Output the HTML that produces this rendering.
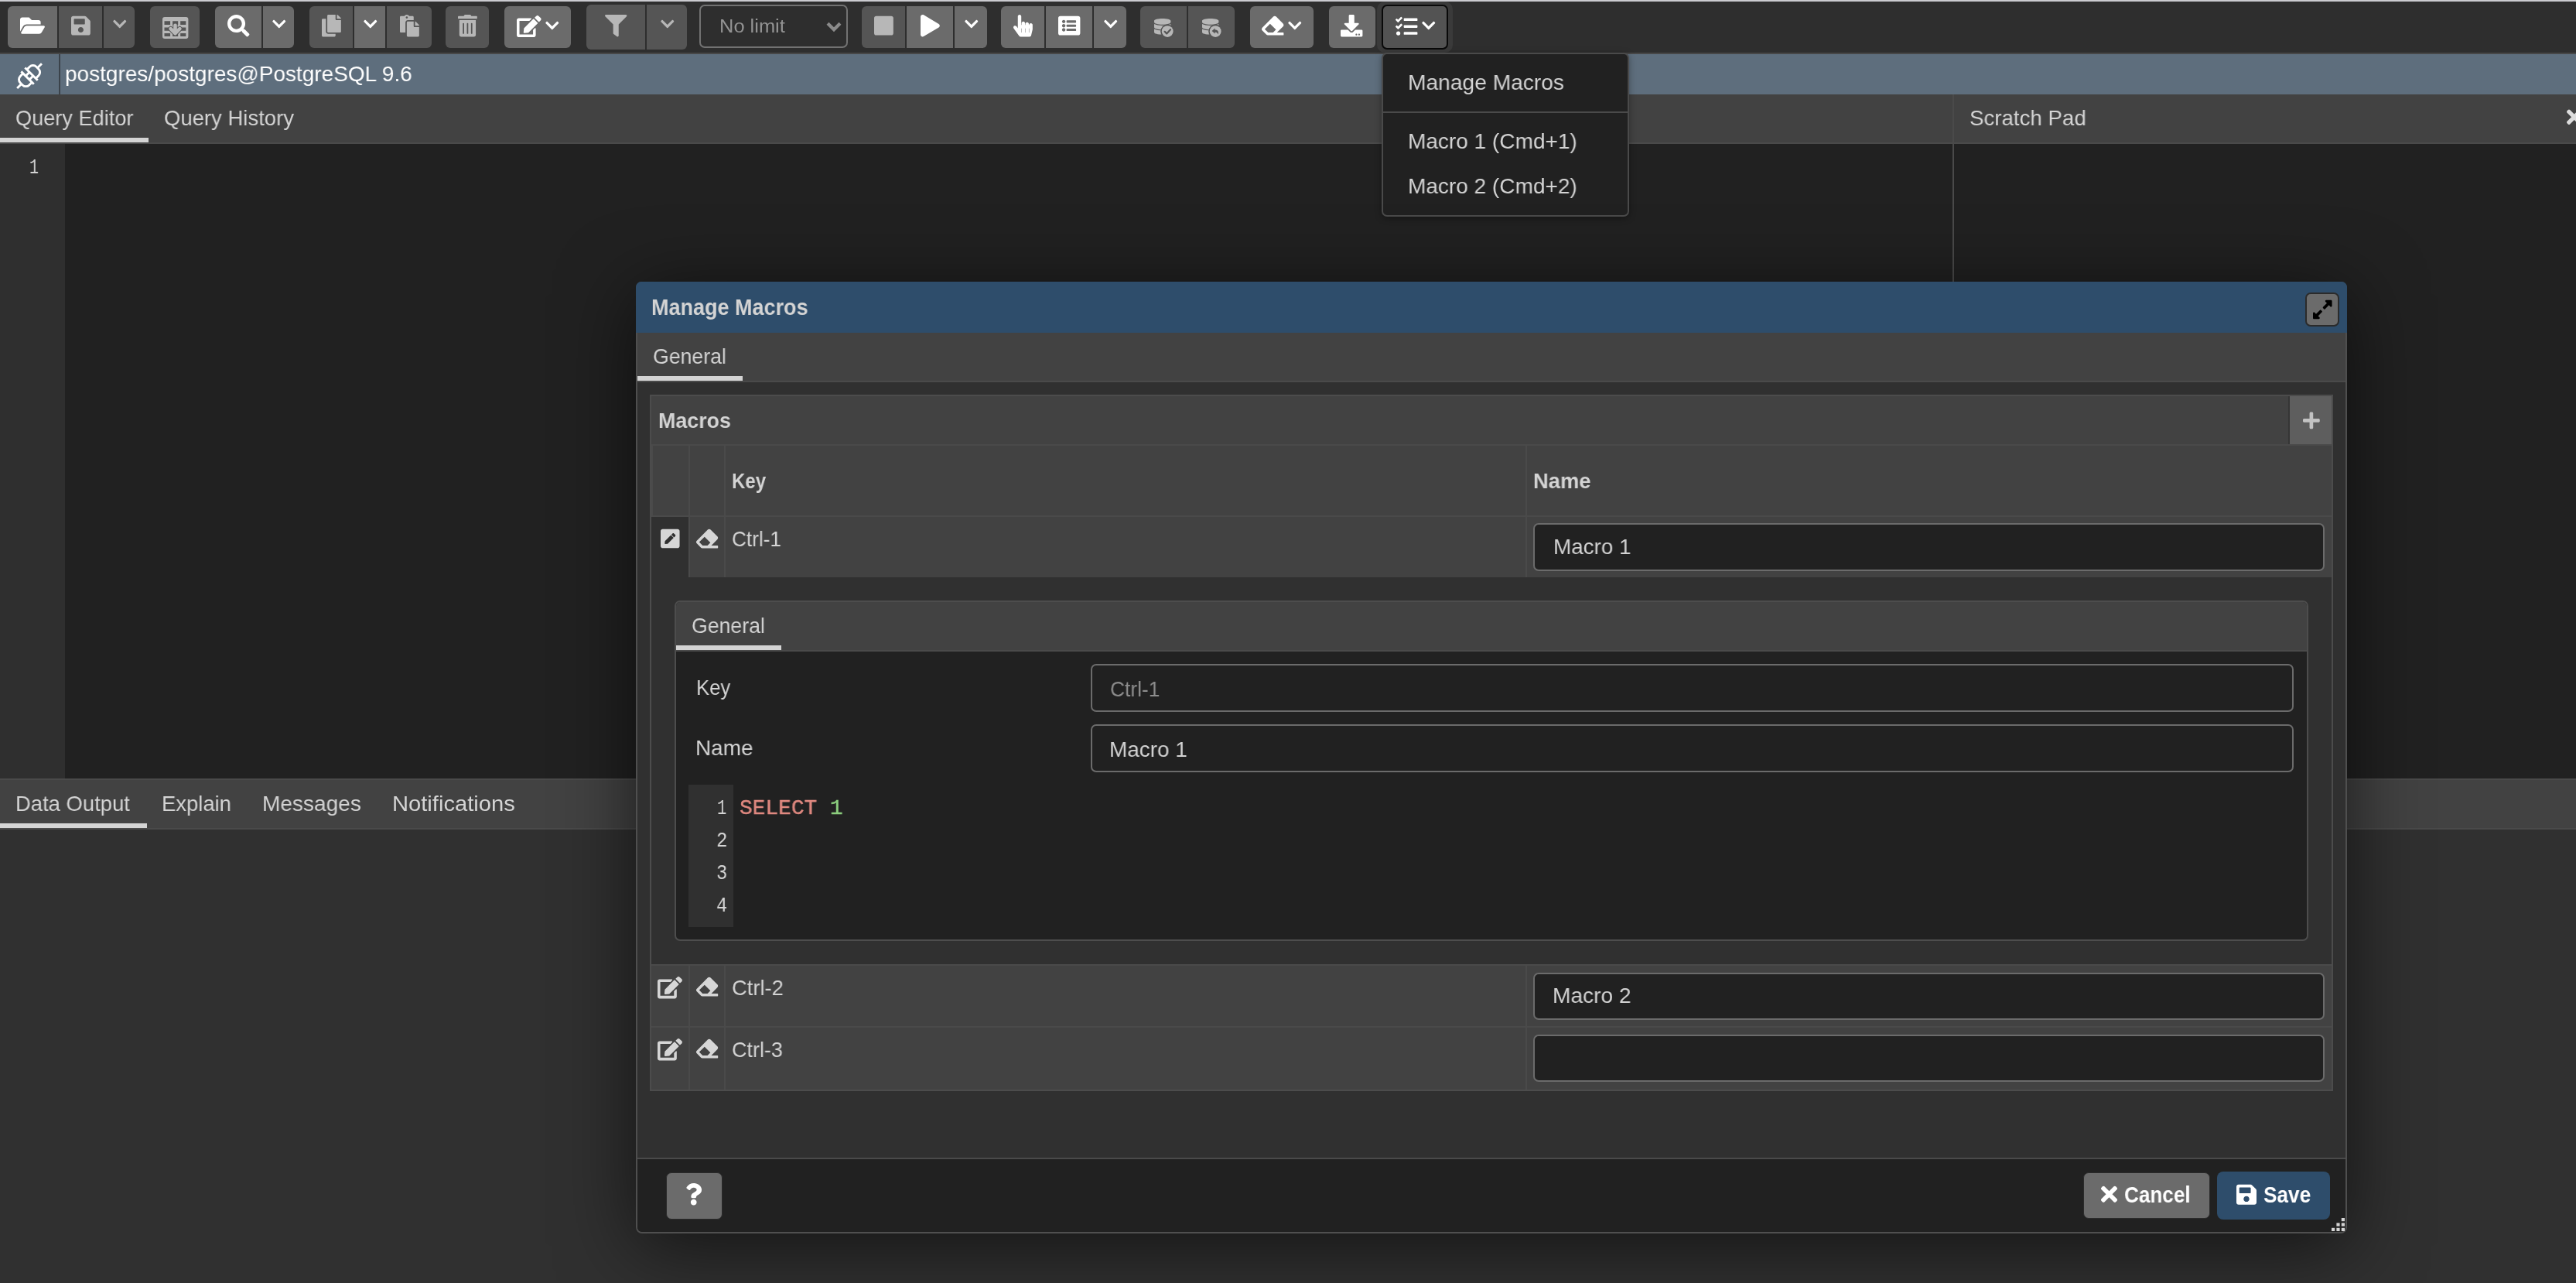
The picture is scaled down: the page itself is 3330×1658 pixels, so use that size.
<!DOCTYPE html>
<html lang="en">
<head>
<meta charset="utf-8">
<title>Query Tool - Manage Macros</title>
<style>
html,body{margin:0;padding:0;}
body{width:3330px;height:1658px;overflow:hidden;background:#212121;position:relative;
 font-family:"Liberation Sans",sans-serif;font-size:28.5px;color:#d4d4d4;}
*{box-sizing:border-box;}
.abs{position:absolute;}
.t{position:absolute;white-space:pre;line-height:1;transform-origin:0 0;will-change:transform;}
.b{font-weight:700;}
svg{position:absolute;display:block;overflow:visible;}
/* top strip */
#strip{left:0;top:0;width:3330px;height:2px;background:#cbcbd0;}
#toolbar{left:0;top:2px;width:3330px;height:66px;background:#2e2e2e;}
#tbline{left:0;top:68px;width:3330px;height:2px;background:#474747;}
.btn{position:absolute;top:8px;height:54px;background:#6b6b6b;}
.btn.d{background:#555555;}
.btn svg{fill:#fff;}
.btn.d svg{fill:#b7b7b7;}
.rl{border-top-left-radius:6px;border-bottom-left-radius:6px;}
.rr{border-top-right-radius:6px;border-bottom-right-radius:6px;}
#connbar{left:0;top:70px;width:3330px;height:52px;background:#5e6e7d;}
#connsep{left:76px;top:70px;width:2px;height:52px;background:#3b434b;}
.tabbar{position:absolute;background:#424242;}
.mono{font-family:"Liberation Mono",monospace;}
.kw{-webkit-text-stroke:0.45px currentColor;}
#conn{left:84.47px;top:80.80px;transform:scaleX(0.9816);color:#fff;}
#tqe{left:19.56px;top:137.80px;transform:scaleX(0.9525);}
#tqh{left:211.67px;top:137.80px;transform:scaleX(0.9643);}
#tsp{left:2546.08px;top:137.80px;transform:scaleX(0.9708);}
#nolimit{left:930.49px;top:22.35px;transform:scaleX(1.0434);font-size:24.4px;color:#939393;}
#ed1{left:37.99px;top:203.30px;transform:scaleX(0.7044);}
#tdo{left:19.87px;top:1023.80px;transform:scaleX(0.9621);}
#tex{left:208.63px;top:1023.80px;transform:scaleX(0.9628);}
#tme{left:338.90px;top:1023.80px;transform:scaleX(0.984);}
#tno{left:507.20px;top:1023.80px;transform:scaleX(1.0223);}
#mm{left:1820.02px;top:91.80px;transform:scaleX(0.9883);}
#m1{left:1820.03px;top:167.80px;transform:scaleX(0.9831);}
#m2{left:1820.03px;top:225.80px;transform:scaleX(0.9831);}
#dlgtitle{left:841.83px;top:381.55px;transform:scaleX(0.8997);font-size:30.0px;}
#tabgen{left:844.22px;top:445.80px;transform:scaleX(0.9355);}
#macros{left:851.44px;top:528.80px;transform:scaleX(0.9408);}
#hkey{left:946.12px;top:606.80px;transform:scaleX(0.8427);}
#hname{left:1981.90px;top:606.80px;transform:scaleX(0.9593);}
#ctrl1{left:945.92px;top:681.80px;transform:scaleX(0.9187);}
#in1{left:2007.77px;top:691.80px;transform:scaleX(0.9771);}
#tabgen2{left:894.22px;top:793.80px;transform:scaleX(0.9355);}
#lkey{left:899.81px;top:873.80px;transform:scaleX(0.9024);}
#inkey{left:1434.98px;top:875.80px;transform:scaleX(0.9243);color:#8d8d8d;}
#lname{left:899.42px;top:951.80px;transform:scaleX(0.9796);}
#inname{left:1434.47px;top:953.80px;transform:scaleX(0.98);}
#ln1{left:927.41px;top:1031.30px;transform:scaleX(0.7174);}
#ln2{left:925.96px;top:1073.30px;transform:scaleX(0.8409);}
#ln3{left:926.49px;top:1115.30px;transform:scaleX(0.8323);}
#ln4{left:926.12px;top:1157.30px;transform:scaleX(0.8266);}
#code{left:956.43px;top:1031.07px;transform:scaleX(0.9765);}
#ctrl2{left:946.19px;top:1261.80px;transform:scaleX(0.96);}
#in2{left:2007.43px;top:1271.80px;transform:scaleX(0.9872);}
#ctrl3{left:946.26px;top:1341.80px;transform:scaleX(0.9462);}
#cancel{left:2746.14px;top:1528.90px;transform:scaleX(0.8906);font-size:29.3px;color:#fff;}
#save{left:2925.67px;top:1528.90px;transform:scaleX(0.8935);font-size:29.3px;color:#fff;}
.uline{position:absolute;background:#d4d4d4;height:6px;}
</style>
</head>
<body>
<div id="strip" class="abs"></div>
<div id="toolbar" class="abs"></div>
<div id="tbline" class="abs"></div>
<div class="btn rl" style="left:10px;width:64.4px"><svg style="left:16.23px;top:11.40px;width:31.95px;height:28.40px" viewBox="0 0 576 512"><path d="M572.694 292.093L500.270 416.248A63.997 63.997 0 0 1 444.989 448H45.025c-18.523 0-30.064-20.093-20.731-36.093l72.424-124.155A64 64 0 0 1 152 256h399.964c18.523 0 30.064 20.093 20.730 36.093zM152 224h328v-48c0-26.510-21.490-48-48-48H272l-64-64H48C21.490 64 0 85.490 0 112v278.046l69.077-118.418C86.214 242.250 117.989 224 152 224z"/></svg></div>
<div class="btn d" style="left:76px;width:56.4px"><svg style="left:15.78px;top:11.40px;width:24.85px;height:28.40px" viewBox="0 0 448 512"><path d="M433.941 129.941l-83.882-83.882A48 48 0 0 0 316.118 32H48C21.490 32 0 53.490 0 80v352c0 26.510 21.490 48 48 48h352c26.510 0 48-21.490 48-48V163.882a48 48 0 0 0-14.059-33.941zM224 416c-35.346 0-64-28.654-64-64 0-35.346 28.654-64 64-64s64 28.654 64 64c0 35.346-28.654 64-64 64zm96-304.520V212c0 6.627-5.373 12-12 12H76c-6.627 0-12-5.373-12-12V108c0-6.627 5.373-12 12-12h228.520c3.183 0 6.235 1.264 8.485 3.515l3.480 3.480A11.996 11.996 0 0 1 320 111.480z"/></svg></div>
<div class="btn d rr" style="left:134px;width:40.0px"><svg style="left:11.55px;top:12.80px;width:17.50px;height:20.00px" viewBox="0 0 448 512"><path d="M207.029 381.476L12.686 187.132c-9.373-9.373-9.373-24.569 0-33.941l22.667-22.667c9.357-9.357 24.522-9.375 33.901-.04L224 284.505l154.745-154.021c9.379-9.335 24.544-9.317 33.901.04l22.667 22.667c9.373 9.373 9.373 24.569 0 33.941L240.971 381.476c-9.373 9.372-24.569 9.372-33.942 0z"/></svg></div>
<div class="btn d rl rr" style="left:194px;width:64.0px"><svg style="left:15.7px;top:13.9px;width:33.4px;height:28.1px" viewBox="0 0 334 281"><path fill-rule="evenodd" d="M30 0H304Q334 0 334 30V251Q334 281 304 281H30Q0 281 0 251V30Q0 0 30 0ZM25 52V101H101V52ZM131 52V101H202V52ZM232 52V101H303V52ZM25 134V177H101V134ZM131 134V177H202V134ZM232 134V177H303V134ZM25 210V251H101V210ZM131 210V251H202V210ZM232 210V251H303V210Z"/><path d="M165 107V205M106 152L165 212L224 152" fill="none" stroke="#555" stroke-width="64" stroke-linejoin="round" stroke-linecap="round"/><path d="M165 107V205M106 152L165 212L224 152" fill="none" stroke="#b7b7b7" stroke-width="46" stroke-linejoin="round" stroke-linecap="round"/></svg></div>
<div class="btn rl" style="left:278px;width:60.0px"><svg style="left:15.80px;top:11.40px;width:28.40px;height:28.40px" viewBox="0 0 512 512"><path d="M505 442.700L405.300 343c-4.500-4.500-10.600-7-17-7H372c27.600-35.300 44-79.700 44-128C416 93.100 322.900 0 208 0S0 93.100 0 208s93.100 208 208 208c48.300 0 92.700-16.400 128-44v16.300c0 6.400 2.500 12.500 7 17l99.700 99.700c9.400 9.400 24.600 9.400 33.900 0l28.300-28.300c9.400-9.400 9.400-24.600.1-34zM208 336c-70.700 0-128-57.200-128-128 0-70.700 57.200-128 128-128 70.700 0 128 57.200 128 128 0 70.700-57.200 128-128 128z"/></svg></div>
<div class="btn rr" style="left:340px;width:40.0px"><svg style="left:11.55px;top:12.80px;width:17.50px;height:20.00px" viewBox="0 0 448 512"><path d="M207.029 381.476L12.686 187.132c-9.373-9.373-9.373-24.569 0-33.941l22.667-22.667c9.357-9.357 24.522-9.375 33.901-.04L224 284.505l154.745-154.021c9.379-9.335 24.544-9.317 33.901.04l22.667 22.667c9.373 9.373 9.373 24.569 0 33.941L240.971 381.476c-9.373 9.372-24.569 9.372-33.942 0z"/></svg></div>
<div class="btn d rl" style="left:400px;width:56.0px"><svg style="left:15.58px;top:11.40px;width:24.85px;height:28.40px" viewBox="0 0 448 512"><path d="M320 448v40c0 13.255-10.745 24-24 24H24c-13.255 0-24-10.745-24-24V120c0-13.255 10.745-24 24-24h72v296c0 30.879 25.121 56 56 56h168zm0-344V0H152c-13.255 0-24 10.745-24 24v368c0 13.255 10.745 24 24 24h272c13.255 0 24-10.745 24-24V128H344c-13.200 0-24-10.800-24-24zm120.971-31.029L375.029 7.029A24 24 0 0 0 358.059 0H352v96h96v-6.059a24 24 0 0 0-7.029-16.970z"/></svg></div>
<div class="btn" style="left:458px;width:40.0px"><svg style="left:11.55px;top:12.80px;width:17.50px;height:20.00px" viewBox="0 0 448 512"><path d="M207.029 381.476L12.686 187.132c-9.373-9.373-9.373-24.569 0-33.941l22.667-22.667c9.357-9.357 24.522-9.375 33.901-.04L224 284.505l154.745-154.021c9.379-9.335 24.544-9.317 33.901.04l22.667 22.667c9.373 9.373 9.373 24.569 0 33.941L240.971 381.476c-9.373 9.372-24.569 9.372-33.942 0z"/></svg></div>
<div class="btn d rr" style="left:500px;width:58.0px"><svg style="left:16.58px;top:11.40px;width:24.85px;height:28.40px" viewBox="0 0 448 512"><path d="M128 184c0-30.879 25.122-56 56-56h136V56c0-13.255-10.745-24-24-24h-80.610C204.306 12.890 183.637 0 160 0s-44.306 12.890-55.390 32H24C10.745 32 0 42.745 0 56v336c0 13.255 10.745 24 24 24h104V184zm32-144c13.255 0 24 10.745 24 24s-10.745 24-24 24-24-10.745-24-24 10.745-24 24-24zm184 248h104v200c0 13.255-10.745 24-24 24H184c-13.255 0-24-10.745-24-24V184c0-13.255 10.745-24 24-24h136v104c0 13.200 10.800 24 24 24zm104-38.059V256h-96v-96h6.059a24 24 0 0 1 16.970 7.029l65.941 65.941a24.002 24.002 0 0 1 7.030 16.971z"/></svg></div>
<div class="btn d rl rr" style="left:576px;width:56.0px"><svg style="left:15.58px;top:11.40px;width:24.85px;height:28.40px" viewBox="0 0 448 512"><path d="M32 464a48 48 0 0 0 48 48h288a48 48 0 0 0 48-48V128H32zm272-256a16 16 0 0 1 32 0v224a16 16 0 0 1-32 0zm-96 0a16 16 0 0 1 32 0v224a16 16 0 0 1-32 0zm-96 0a16 16 0 0 1 32 0v224a16 16 0 0 1-32 0zM432 32H312l-9.400-18.700A24 24 0 0 0 281.100 0H166.800a23.720 23.720 0 0 0-21.400 13.300L136 32H16A16 16 0 0 0 0 48v32a16 16 0 0 0 16 16h416a16 16 0 0 0 16-16V48a16 16 0 0 0-16-16z"/></svg></div>
<div class="btn rl rr" style="left:652px;width:86.0px"><svg style="left:15.75px;top:11.70px;width:31.61px;height:28.10px" viewBox="0 0 576 512"><path d="M402.600 83.200l90.200 90.200c3.800 3.800 3.800 10 0 13.800L274.400 405.600l-92.800 10.300c-12.400 1.400-22.900-9.100-21.500-21.500l10.300-92.800L388.800 83.200c3.800-3.800 10-3.800 13.800 0zm162-22.900l-48.800-48.800c-15.200-15.200-39.900-15.200-55.200 0l-35.400 35.400c-3.800 3.800-3.800 10 0 13.800l90.200 90.200c3.800 3.800 10 3.800 13.800 0l35.400-35.400c15.200-15.300 15.200-40 0-55.200zM384 346.200V448H64V128h229.800c3.200 0 6.200-1.300 8.500-3.500l40-40c7.600-7.600 2.200-20.500-8.500-20.500H48C21.500 64 0 85.500 0 112v352c0 26.500 21.500 48 48 48h352c26.500 0 48-21.500 48-48V306.200c0-10.700-12.900-16-20.500-8.500l-40 40c-2.200 2.300-3.500 5.300-3.500 8.500z"/></svg><svg style="left:52.65px;top:14.80px;width:17.50px;height:20.00px" viewBox="0 0 448 512"><path d="M207.029 381.476L12.686 187.132c-9.373-9.373-9.373-24.569 0-33.941l22.667-22.667c9.357-9.357 24.522-9.375 33.901-.04L224 284.505l154.745-154.021c9.379-9.335 24.544-9.317 33.901.04l22.667 22.667c9.373 9.373 9.373 24.569 0 33.941L240.971 381.476c-9.373 9.372-24.569 9.372-33.942 0z"/></svg></div>
<div class="btn d rl" style="left:758px;width:76.0px;top:6px;height:58px"><svg style="left:23.80px;top:13.40px;width:28.40px;height:28.40px" viewBox="0 0 512 512"><path d="M487.976 0H24.028C2.710 0-8.047 25.866 7.058 40.971L192 225.941V432c0 7.831 3.821 15.170 10.237 19.662l80 55.980C298.020 518.690 320 507.493 320 487.980V225.941l184.947-184.970C520.021 25.896 509.338 0 487.976 0z"/></svg></div>
<div class="btn d rr" style="left:836px;width:52.0px;top:6px;height:58px"><svg style="left:17.55px;top:14.80px;width:17.50px;height:20.00px" viewBox="0 0 448 512"><path d="M207.029 381.476L12.686 187.132c-9.373-9.373-9.373-24.569 0-33.941l22.667-22.667c9.357-9.357 24.522-9.375 33.901-.04L224 284.505l154.745-154.021c9.379-9.335 24.544-9.317 33.901.04l22.667 22.667c9.373 9.373 9.373 24.569 0 33.941L240.971 381.476c-9.373 9.372-24.569 9.372-33.942 0z"/></svg></div>
<div class="btn d rl" style="left:1114px;width:56.0px"><svg style="left:15.58px;top:11.40px;width:24.85px;height:28.40px" viewBox="0 0 448 512"><path d="M400 32H48C21.5 32 0 53.5 0 80v352c0 26.5 21.5 48 48 48h352c26.5 0 48-21.500 48-48V80c0-26.500-21.500-48-48-48z"/></svg></div>
<div class="btn" style="left:1172px;width:60.0px"><svg style="left:17.58px;top:11.40px;width:24.85px;height:28.40px" viewBox="0 0 448 512"><path d="M424.4 214.7L72.4 6.6C43.8-10.3 0 6.1 0 47.9V464c0 37.5 40.7 60.1 72.4 41.3l352-208c31.4-18.5 31.5-64.1 0-82.6z"/></svg></div>
<div class="btn rr" style="left:1234px;width:42.0px"><svg style="left:12.55px;top:12.80px;width:17.50px;height:20.00px" viewBox="0 0 448 512"><path d="M207.029 381.476L12.686 187.132c-9.373-9.373-9.373-24.569 0-33.941l22.667-22.667c9.357-9.357 24.522-9.375 33.901-.04L224 284.505l154.745-154.021c9.379-9.335 24.544-9.317 33.901.04l22.667 22.667c9.373 9.373 9.373 24.569 0 33.941L240.971 381.476c-9.373 9.372-24.569 9.372-33.942 0z"/></svg></div>
<div class="btn rl" style="left:1294px;width:56.0px"><svg style="left:15.58px;top:11.40px;width:24.85px;height:28.40px" viewBox="0 0 448 512"><path d="M448 240v96c0 3.084-.356 6.159-1.063 9.162l-32 136C410.686 499.230 394.562 512 376 512H168a40.004 40.004 0 0 1-32.350-16.473l-127.997-176c-12.993-17.866-9.043-42.883 8.822-55.876 17.867-12.994 42.884-9.043 55.877 8.823L104 315.992V40c0-22.091 17.908-40 40-40s40 17.909 40 40v200h8v-40c0-22.091 17.908-40 40-40s40 17.909 40 40v40h8v-24c0-22.091 17.908-40 40-40s40 17.909 40 40v24h8c0-22.091 17.908-40 40-40s40 17.909 40 40zm-256 80h-8v96h8v-96zm88 0h-8v96h8v-96zm88 0h-8v96h8v-96z"/></svg></div>
<div class="btn" style="left:1352px;width:60.0px"><svg style="left:15.80px;top:11.40px;width:28.40px;height:28.40px" viewBox="0 0 512 512"><path d="M464 480H48c-26.510 0-48-21.490-48-48V80c0-26.510 21.490-48 48-48h416c26.510 0 48 21.490 48 48v352c0 26.510-21.490 48-48 48zM128 120c-22.091 0-40 17.909-40 40s17.909 40 40 40 40-17.909 40-40-17.909-40-40-40zm0 96c-22.091 0-40 17.909-40 40s17.909 40 40 40 40-17.909 40-40-17.909-40-40-40zm0 96c-22.091 0-40 17.909-40 40s17.909 40 40 40 40-17.909 40-40-17.909-40-40-40zm288-136v-32c0-6.627-5.373-12-12-12H204c-6.627 0-12 5.373-12 12v32c0 6.627 5.373 12 12 12h200c6.627 0 12-5.373 12-12zm0 96v-32c0-6.627-5.373-12-12-12H204c-6.627 0-12 5.373-12 12v32c0 6.627 5.373 12 12 12h200c6.627 0 12-5.373 12-12zm0 96v-32c0-6.627-5.373-12-12-12H204c-6.627 0-12 5.373-12 12v32c0 6.627 5.373 12 12 12h200c6.627 0 12-5.373 12-12z"/></svg></div>
<div class="btn rr" style="left:1414px;width:42.0px"><svg style="left:12.55px;top:12.80px;width:17.50px;height:20.00px" viewBox="0 0 448 512"><path d="M207.029 381.476L12.686 187.132c-9.373-9.373-9.373-24.569 0-33.941l22.667-22.667c9.357-9.357 24.522-9.375 33.901-.04L224 284.505l154.745-154.021c9.379-9.335 24.544-9.317 33.901.04l22.667 22.667c9.373 9.373 9.373 24.569 0 33.941L240.971 381.476c-9.373 9.372-24.569 9.372-33.942 0z"/></svg></div>
<div class="btn d rl" style="left:1474px;width:60.0px"><svg style="left:17.80px;top:15.90px;width:21.4px;height:20.6px" viewBox="0 0 448 512" preserveAspectRatio="none"><path d="M448 73.143v45.714C448 159.143 347.667 192 224 192S0 159.143 0 118.857V73.143C0 32.857 100.333 0 224 0s224 32.857 224 73.143zM448 176v102.857C448 319.143 347.667 352 224 352S0 319.143 0 278.857V176c48.125 33.143 136.208 48.572 224 48.572S399.874 209.143 448 176zm0 160v102.857C448 479.143 347.667 512 224 512S0 479.143 0 438.857V336c48.125 33.143 136.208 48.572 224 48.572S399.874 369.143 448 336z"/></svg><svg style="left:0;top:0;width:60px;height:54px" viewBox="0 0 60 54"><circle cx="35.2" cy="32.6" r="9.0" fill="#555"/><circle cx="35.2" cy="32.6" r="7.4"/><path d="M31.6 32.800000000000004L34.2 35.4L39.0 30.200000000000003" fill="none" stroke="#555" stroke-width="2.2" stroke-linecap="round" stroke-linejoin="round"/></svg></div>
<div class="btn d rr" style="left:1536px;width:60.0px"><svg style="left:17.80px;top:15.90px;width:21.4px;height:20.6px" viewBox="0 0 448 512" preserveAspectRatio="none"><path d="M448 73.143v45.714C448 159.143 347.667 192 224 192S0 159.143 0 118.857V73.143C0 32.857 100.333 0 224 0s224 32.857 224 73.143zM448 176v102.857C448 319.143 347.667 352 224 352S0 319.143 0 278.857V176c48.125 33.143 136.208 48.572 224 48.572S399.874 209.143 448 176zm0 160v102.857C448 479.143 347.667 512 224 512S0 479.143 0 438.857V336c48.125 33.143 136.208 48.572 224 48.572S399.874 369.143 448 336z"/></svg><svg style="left:0;top:0;width:60px;height:54px" viewBox="0 0 60 54"><circle cx="35.2" cy="32.6" r="9.0" fill="#555"/><circle cx="35.2" cy="32.6" r="7.4"/><path d="M30.6 32.0L34.6 28.400000000000002V30.6C38.6 30.6 39.800000000000004 33.2 38.6 36.6C38.0 34.4 36.6 33.4 34.6 33.4V35.6Z" fill="#555"/></svg></div>
<div class="btn rl rr" style="left:1616px;width:82.0px"><svg style="left:14.90px;top:10.80px;width:28.40px;height:28.40px" viewBox="0 0 512 512"><path d="M497.941 273.941c18.745-18.745 18.745-49.137 0-67.882l-160-160c-18.745-18.745-49.136-18.746-67.883 0l-256 256c-18.745 18.745-18.745 49.137 0 67.882l96 96A48.004 48.004 0 0 0 144 480h356c6.627 0 12-5.373 12-12v-40c0-6.627-5.373-12-12-12H355.883l142.058-142.059zm-302.627-62.627l137.373 137.373L265.373 416H150.628l-80-80 124.686-124.686z"/></svg><svg style="left:49.10px;top:14.80px;width:17.50px;height:20.00px" viewBox="0 0 448 512"><path d="M207.029 381.476L12.686 187.132c-9.373-9.373-9.373-24.569 0-33.941l22.667-22.667c9.357-9.357 24.522-9.375 33.901-.04L224 284.505l154.745-154.021c9.379-9.335 24.544-9.317 33.901.04l22.667 22.667c9.373 9.373 9.373 24.569 0 33.941L240.971 381.476c-9.373 9.372-24.569 9.372-33.942 0z"/></svg></div>
<div class="btn rl rr" style="left:1718px;width:60.0px"><svg style="left:14.80px;top:11.40px;width:28.40px;height:28.40px" viewBox="0 0 512 512"><path d="M216 0h80c13.300 0 24 10.700 24 24v168h87.700c17.800 0 26.700 21.500 14.100 34.100L269.700 378.300c-7.500 7.500-19.800 7.500-27.300 0L90.100 226.100c-12.600-12.600-3.700-34.100 14.100-34.100H192V24c0-13.300 10.700-24 24-24zm296 376v112c0 13.300-10.700 24-24 24H24c-13.300 0-24-10.700-24-24V376c0-13.300 10.700-24 24-24h146.700l49 49c20.100 20.100 52.500 20.100 72.600 0l49-49H488c13.300 0 24 10.700 24 24zm-124 88c0-11-9-20-20-20s-20 9-20 20 9 20 20 20 20-9 20-20zm64 0c0-11-9-20-20-20s-20 9-20 20 9 20 20 20 20-9 20-20z"/></svg></div>
<div class="abs" style="left:904px;top:6px;width:192px;height:56px;border:2px solid #727272;border-radius:7px;background:#2e2e2e"></div>
<div id="nolimit" class="t ">No limit</div>
<svg style="left:1068px;top:27px;width:20px;height:15px" viewBox="0 0 20 15"><path d="M2 3.2L10 11.2L18 3.2" fill="none" stroke="#8b8b8b" stroke-width="4.2"/></svg>
<div class="abs" style="left:1780px;top:2px;width:98px;height:66px;border-radius:10px;background:#3a3a3a"></div>
<div class="btn rl rr" style="left:1786px;top:6px;width:86px;height:58px;background:#535353;border:2.5px solid #090909;border-radius:7px"><svg style="left:15.60px;top:11.60px;width:28.40px;height:28.40px" viewBox="0 0 512 512"><path d="M139.610 35.500a12 12 0 0 0-17 0L58.930 98.810l-22.700-22.120a12 12 0 0 0-17 0L3.530 92.410a12 12 0 0 0 0 17l47.590 47.400a12.780 12.780 0 0 0 17.610 0l15.590-15.620L156.520 69a12.090 12.090 0 0 0 .09-17zm0 159.190a12 12 0 0 0-17 0l-63.680 63.720-22.700-22.100a12 12 0 0 0-17 0L3.530 252a12 12 0 0 0 0 17L51 316.500a12.770 12.770 0 0 0 17.600 0l15.700-15.690 72.200-72.220a12 12 0 0 0 .09-16.900zM64 368c-26.490 0-48.590 21.500-48.590 48S37.530 464 64 464a48 48 0 0 0 0-96zm432 16H208a16 16 0 0 0-16 16v32a16 16 0 0 0 16 16h288a16 16 0 0 0 16-16v-32a16 16 0 0 0-16-16zm0-320H208a16 16 0 0 0-16 16v32a16 16 0 0 0 16 16h288a16 16 0 0 0 16-16V80a16 16 0 0 0-16-16zm0 160H208a16 16 0 0 0-16 16v32a16 16 0 0 0 16 16h288a16 16 0 0 0 16-16v-32a16 16 0 0 0-16-16z"/></svg><svg style="left:49.85px;top:15.00px;width:17.50px;height:20.00px" viewBox="0 0 448 512"><path d="M207.029 381.476L12.686 187.132c-9.373-9.373-9.373-24.569 0-33.941l22.667-22.667c9.357-9.357 24.522-9.375 33.901-.04L224 284.505l154.745-154.021c9.379-9.335 24.544-9.317 33.901.04l22.667 22.667c9.373 9.373 9.373 24.569 0 33.941L240.971 381.476c-9.373 9.372-24.569 9.372-33.942 0z"/></svg></div>

<div id="connbar" class="abs"></div>
<div id="connsep" class="abs"></div>
<svg style="left:0;top:70px;width:76px;height:52px" viewBox="0 70 76 52" fill="none" stroke="#fff" stroke-width="2.9">
<g transform="translate(38.05 98.1) rotate(-45)">
<path d="M-22.5 0H-14.6M14.6 0H22.5"/>
<path d="M-3.5 -8.1H-8.6A6 6 0 0 0 -14.6 -2.1V2.1A6 6 0 0 0 -8.6 8.1H-3.5"/>
<path d="M3.5 -8.1H8.6A6 6 0 0 1 14.6 -2.1V2.1A6 6 0 0 1 8.6 8.1H3.5"/>
<path d="M-3.5 -11.6V11.6M3.5 -11.6V11.6"/>
<path d="M-3.5 -3.4H3.5M-3.5 3.4H3.5"/>
</g>
</svg>
<div id="conn" class="t ">postgres/postgres@PostgreSQL 9.6</div>
<!-- top tab bar -->
<div class="tabbar" style="left:0;top:122px;width:3330px;height:63px"></div>
<div class="abs" style="left:0;top:184px;width:3330px;height:2px;background:#4a4a4a"></div>
<div class="uline" style="left:0;top:178px;width:192px"></div>
<div id="tqe" class="t ">Query Editor</div>
<div id="tqh" class="t ">Query History</div>
<div class="abs" style="left:2524px;top:122px;width:2px;height:1000px;background:#4a4a4a"></div>
<div id="tsp" class="t ">Scratch Pad</div>
<svg style="left:3318.40px;top:137.40px;width:19.52px;height:28.40px" viewBox="0 0 352 512" fill="#dcdcdc"><path d="M242.720 256l100.070-100.070c12.280-12.280 12.280-32.190 0-44.480l-22.240-22.240c-12.280-12.280-32.190-12.280-44.480 0L176 189.280 75.930 89.210c-12.280-12.280-32.190-12.280-44.480 0L9.210 111.450c-12.280 12.280-12.280 32.190 0 44.480L109.280 256 9.210 356.070c-12.280 12.280-12.280 32.190 0 44.480l22.240 22.240c12.280 12.280 32.200 12.280 44.480 0L176 322.720l100.070 100.070c12.280 12.280 32.200 12.280 44.480 0l22.240-22.240c12.280-12.280 12.280-32.190 0-44.480L242.720 256z"/></svg>
<!-- editor -->
<div class="abs" style="left:0;top:186px;width:84px;height:820px;background:#2f2f2f"></div>
<div id="ed1" class="t mono">1</div>
<!-- bottom panel -->
<div class="abs" style="left:0;top:1006px;width:3330px;height:652px;background:#303030"></div>
<div class="tabbar" style="left:0;top:1006px;width:3330px;height:66px;border-top:2px solid #4a4a4a;border-bottom:2px solid #4a4a4a"></div>
<div class="uline" style="left:0;top:1064px;width:190px"></div>
<div id="tdo" class="t ">Data Output</div>
<div id="tex" class="t ">Explain</div>
<div id="tme" class="t ">Messages</div>
<div id="tno" class="t ">Notifications</div>

<div class="abs" style="left:1786px;top:68px;width:320px;height:212px;background:#212121;border:2px solid #4a4a4a;border-radius:7px;box-shadow:0 2px 8px rgba(0,0,0,.35)"></div>
<div class="abs" style="left:1788px;top:144px;width:316px;height:2px;background:#4a4a4a"></div>
<div id="mm" class="t ">Manage Macros</div>
<div id="m1" class="t ">Macro 1 (Cmd+1)</div>
<div id="m2" class="t ">Macro 2 (Cmd+2)</div>

<div class="abs" style="left:822px;top:364px;width:2212px;height:1230px;background:#303030;border:2px solid #4f4f4f;border-radius:8px;box-shadow:0 16px 98px rgba(0,0,0,.6)"></div>
<div class="abs" style="left:822px;top:364px;width:2212px;height:66px;background:#2e4d6b;border-radius:7px 7px 0 0"></div>
<div id="dlgtitle" class="t b">Manage Macros</div>
<div class="abs" style="left:2980px;top:378px;width:44px;height:44px;background:#6b6b6b;border:2px solid #2b2b2b;border-radius:7px"></div>
<svg style="left:2989.60px;top:385.90px;width:24.59px;height:28.10px" viewBox="0 0 448 512" fill="#000"><path d="M212.686 315.314L120 408l32.922 31.029c15.120 15.120 4.412 40.971-16.970 40.971h-112C10.697 480 0 469.255 0 456V344c0-21.382 25.803-32.090 40.922-16.971L72 360l92.686-92.686c6.248-6.248 16.379-6.248 22.627 0l25.373 25.373c6.249 6.248 6.249 16.378 0 22.627zm22.628-118.628L328 104l-32.922-31.029C279.958 57.851 290.666 32 312.048 32h112C437.303 32 448 42.745 448 56v112c0 21.382-25.803 32.090-40.922 16.971L376 152l-92.686 92.686c-6.248 6.248-16.379 6.248-22.627 0l-25.373-25.373c-6.249-6.248-6.249-16.378 0-22.627z"/></svg>
<div class="abs" style="left:824px;top:430px;width:2208px;height:62px;background:#424242"></div>
<div class="abs" style="left:824px;top:492px;width:2208px;height:2px;background:#4a4a4a"></div>
<div class="abs" style="left:824px;top:486px;width:136px;height:6px;background:#d4d4d4"></div>
<div id="tabgen" class="t ">General</div>
<div class="abs" style="left:840px;top:510px;width:2176px;height:900px;background:#424242;border:2px solid #4c4c4c"></div>
<div id="macros" class="t b">Macros</div>
<div class="abs" style="left:2958px;top:512px;width:56px;height:62px;background:#5e5e5e;border-left:2px solid #353535"></div>
<svg style="left:2976.61px;top:530.80px;width:21.79px;height:24.90px" viewBox="0 0 448 512" fill="#c3c3c3"><path d="M416 208H272V64c0-17.670-14.330-32-32-32h-32c-17.670 0-32 14.330-32 32v144H32c-17.670 0-32 14.330-32 32v32c0 17.670 14.330 32 32 32h144v144c0 17.670 14.330 32 32 32h32c17.670 0 32-14.330 32-32V304h144c17.670 0 32-14.330 32-32v-32c0-17.670-14.330-32-32-32z"/></svg>
<div class="abs" style="left:842px;top:574px;width:2172px;height:2px;background:#4a4a4a"></div>
<div class="abs" style="left:842px;top:576px;width:2px;height:90px;background:#4a4a4a"></div>
<div class="abs" style="left:890px;top:576px;width:2px;height:90px;background:#4a4a4a"></div>
<div class="abs" style="left:936px;top:576px;width:2px;height:90px;background:#4a4a4a"></div>
<div class="abs" style="left:1972px;top:576px;width:2px;height:90px;background:#4a4a4a"></div>
<div id="hkey" class="t b">Key</div>
<div id="hname" class="t b">Name</div>
<div class="abs" style="left:842px;top:666px;width:2172px;height:2px;background:#4a4a4a"></div>
<div class="abs" style="left:842px;top:668px;width:48px;height:78px;background:#303030"></div>
<div class="abs" style="left:890px;top:668px;width:2px;height:78px;background:#4a4a4a"></div>
<div class="abs" style="left:936px;top:668px;width:2px;height:78px;background:#4a4a4a"></div>
<div class="abs" style="left:1972px;top:668px;width:2px;height:78px;background:#4a4a4a"></div>
<svg style="left:853.75px;top:681.65px;width:24.54px;height:28.05px" viewBox="0 0 448 512" fill="#d6d6d6"><path d="M400 480H48c-26.500 0-48-21.500-48-48V80c0-26.500 21.500-48 48-48h352c26.500 0 48 21.500 48 48v352c0 26.500-21.500 48-48 48zM238.100 177.900L102.400 313.600l-6.300 57.100c-.8 7.600 5.600 14.100 13.300 13.300l57.100-6.300L302.200 242c2.300-2.300 2.300-6.100 0-8.500L246.700 178c-2.500-2.400-6.300-2.400-8.600-.1zM345 165.100L314.900 135c-9.400-9.400-24.600-9.400-33.900 0l-23.100 23.100c-2.300 2.300-2.300 6.100 0 8.500l55.500 55.500c2.300 2.300 6.100 2.300 8.500 0L345 199c9.300-9.300 9.300-24.500 0-33.900z"/></svg>
<svg style="left:900.00px;top:681.60px;width:28.20px;height:28.20px" viewBox="0 0 512 512" fill="#d6d6d6"><path d="M497.941 273.941c18.745-18.745 18.745-49.137 0-67.882l-160-160c-18.745-18.745-49.136-18.746-67.883 0l-256 256c-18.745 18.745-18.745 49.137 0 67.882l96 96A48.004 48.004 0 0 0 144 480h356c6.627 0 12-5.373 12-12v-40c0-6.627-5.373-12-12-12H355.883l142.058-142.059zm-302.627-62.627l137.373 137.373L265.373 416H150.628l-80-80 124.686-124.686z"/></svg>
<div id="ctrl1" class="t ">Ctrl-1</div>
<div class="abs" style="left:1982px;top:676px;width:1023px;height:61.5px;background:#212121;border:2px solid #6b6b6b;border-radius:7px"></div>
<div id="in1" class="t ">Macro 1</div>
<div class="abs" style="left:842px;top:746px;width:2172px;height:500px;background:#303030"></div>
<div class="abs" style="left:872px;top:776px;width:2112px;height:440px;background:#212121;border:2px solid #4d4d4d;border-radius:7px"></div>
<div class="abs" style="left:874px;top:778px;width:2108px;height:62px;background:#424242;border-radius:5px 5px 0 0"></div>
<div class="abs" style="left:874px;top:840px;width:2108px;height:2px;background:#4a4a4a"></div>
<div class="abs" style="left:874px;top:834px;width:136px;height:6px;background:#d4d4d4"></div>
<div id="tabgen2" class="t ">General</div>
<div id="lkey" class="t ">Key</div>
<div class="abs" style="left:1410px;top:858px;width:1555px;height:61.5px;background:#212121;border:2px solid #6b6b6b;border-radius:7px"></div>
<div id="inkey" class="t ">Ctrl-1</div>
<div id="lname" class="t ">Name</div>
<div class="abs" style="left:1410px;top:936px;width:1555px;height:61.5px;background:#212121;border:2px solid #6b6b6b;border-radius:7px"></div>
<div id="inname" class="t ">Macro 1</div>
<div class="abs" style="left:890px;top:1014px;width:58px;height:183.5px;background:#303030"></div>
<div id="ln1" class="t mono">1</div>
<div id="ln2" class="t mono">2</div>
<div id="ln3" class="t mono">3</div>
<div id="ln4" class="t mono">4</div>
<div id="code" class="t mono kw"><span style="color:#e08980">SELECT</span> <span style="color:#8ccf7e">1</span></div>
<div class="abs" style="left:842px;top:1246px;width:2172px;height:2px;background:#4a4a4a"></div>
<div class="abs" style="left:890px;top:1248px;width:2px;height:78px;background:#4a4a4a"></div>
<div class="abs" style="left:936px;top:1248px;width:2px;height:78px;background:#4a4a4a"></div>
<div class="abs" style="left:1972px;top:1248px;width:2px;height:78px;background:#4a4a4a"></div>
<svg style="left:850.00px;top:1262.20px;width:31.95px;height:28.40px" viewBox="0 0 576 512" fill="#d6d6d6"><path d="M402.600 83.200l90.200 90.200c3.800 3.800 3.800 10 0 13.800L274.400 405.600l-92.800 10.300c-12.400 1.400-22.900-9.100-21.500-21.500l10.300-92.800L388.800 83.200c3.800-3.800 10-3.800 13.800 0zm162-22.900l-48.800-48.800c-15.200-15.200-39.900-15.200-55.200 0l-35.400 35.400c-3.800 3.800-3.800 10 0 13.800l90.200 90.200c3.800 3.800 10 3.800 13.800 0l35.400-35.400c15.200-15.300 15.200-40 0-55.200zM384 346.200V448H64V128h229.800c3.200 0 6.200-1.300 8.500-3.500l40-40c7.600-7.600 2.200-20.500-8.500-20.500H48C21.500 64 0 85.500 0 112v352c0 26.500 21.500 48 48 48h352c26.500 0 48-21.500 48-48V306.200c0-10.700-12.900-16-20.500-8.500l-40 40c-2.200 2.300-3.500 5.300-3.500 8.500z"/></svg>
<svg style="left:900.00px;top:1260.75px;width:28.20px;height:28.20px" viewBox="0 0 512 512" fill="#d6d6d6"><path d="M497.941 273.941c18.745-18.745 18.745-49.137 0-67.882l-160-160c-18.745-18.745-49.136-18.746-67.883 0l-256 256c-18.745 18.745-18.745 49.137 0 67.882l96 96A48.004 48.004 0 0 0 144 480h356c6.627 0 12-5.373 12-12v-40c0-6.627-5.373-12-12-12H355.883l142.058-142.059zm-302.627-62.627l137.373 137.373L265.373 416H150.628l-80-80 124.686-124.686z"/></svg>
<div id="ctrl2" class="t ">Ctrl-2</div>
<div class="abs" style="left:1982px;top:1257px;width:1023px;height:60.5px;background:#212121;border:2px solid #6b6b6b;border-radius:7px"></div>
<div id="in2" class="t ">Macro 2</div>
<div class="abs" style="left:842px;top:1326px;width:2172px;height:2px;background:#4a4a4a"></div>
<div class="abs" style="left:890px;top:1328px;width:2px;height:80px;background:#4a4a4a"></div>
<div class="abs" style="left:936px;top:1328px;width:2px;height:80px;background:#4a4a4a"></div>
<div class="abs" style="left:1972px;top:1328px;width:2px;height:80px;background:#4a4a4a"></div>
<svg style="left:850.00px;top:1342.20px;width:31.95px;height:28.40px" viewBox="0 0 576 512" fill="#d6d6d6"><path d="M402.600 83.200l90.200 90.200c3.800 3.800 3.800 10 0 13.800L274.400 405.600l-92.800 10.300c-12.400 1.400-22.900-9.100-21.500-21.500l10.300-92.800L388.800 83.200c3.800-3.800 10-3.800 13.800 0zm162-22.900l-48.800-48.800c-15.200-15.200-39.900-15.200-55.200 0l-35.400 35.400c-3.800 3.800-3.800 10 0 13.800l90.200 90.200c3.800 3.800 10 3.800 13.800 0l35.400-35.400c15.200-15.300 15.200-40 0-55.200zM384 346.200V448H64V128h229.800c3.200 0 6.200-1.300 8.500-3.500l40-40c7.600-7.600 2.200-20.500-8.500-20.500H48C21.500 64 0 85.500 0 112v352c0 26.500 21.500 48 48 48h352c26.500 0 48-21.500 48-48V306.200c0-10.700-12.900-16-20.500-8.500l-40 40c-2.200 2.300-3.500 5.300-3.500 8.500z"/></svg>
<svg style="left:900.00px;top:1340.75px;width:28.20px;height:28.20px" viewBox="0 0 512 512" fill="#d6d6d6"><path d="M497.941 273.941c18.745-18.745 18.745-49.137 0-67.882l-160-160c-18.745-18.745-49.136-18.746-67.883 0l-256 256c-18.745 18.745-18.745 49.137 0 67.882l96 96A48.004 48.004 0 0 0 144 480h356c6.627 0 12-5.373 12-12v-40c0-6.627-5.373-12-12-12H355.883l142.058-142.059zm-302.627-62.627l137.373 137.373L265.373 416H150.628l-80-80 124.686-124.686z"/></svg>
<div id="ctrl3" class="t ">Ctrl-3</div>
<div class="abs" style="left:1982px;top:1337px;width:1023px;height:60.5px;background:#212121;border:2px solid #6b6b6b;border-radius:7px"></div>
<div class="abs" style="left:824px;top:1496px;width:2208px;height:2px;background:#4a4a4a"></div>
<div class="abs" style="left:824px;top:1498px;width:2208px;height:94px;background:#212121;border-radius:0 0 6px 6px"></div>
<div class="abs" style="left:861px;top:1514.5px;width:72.5px;height:61.0px;background:#6b6b6b;border:1.5px solid #2b2b2b;border-radius:7px"></div>
<svg style="left:886.07px;top:1529.00px;width:21.45px;height:28.60px" viewBox="0 0 384 512" fill="#fff"><path d="M202.021 0C122.202 0 70.503 32.703 29.914 91.026c-7.363 10.580-5.093 25.086 5.178 32.874l43.138 32.709c10.373 7.865 25.132 6.026 33.253-4.148 25.049-31.381 43.630-49.449 82.757-49.449 30.764 0 68.816 19.799 68.816 49.631 0 22.552-18.617 34.134-48.993 51.164-35.423 19.860-82.299 44.576-82.299 106.405V320c0 13.255 10.745 24 24 24h72.471c13.255 0 24-10.745 24-24v-5.773c0-42.860 125.268-44.645 125.268-160.627C377.504 66.256 286.902 0 202.021 0zM192 373.459c-38.196 0-69.271 31.075-69.271 69.271 0 38.195 31.075 69.270 69.271 69.270s69.271-31.075 69.271-69.271-31.075-69.270-69.271-69.270z"/></svg>
<div class="abs" style="left:2693px;top:1514.7px;width:164px;height:60.59999999999991px;background:#6b6b6b;border:1.5px solid #2b2b2b;border-radius:7px"></div>
<svg style="left:2716.40px;top:1527.80px;width:21.04px;height:30.60px" viewBox="0 0 352 512" fill="#fff"><path d="M242.720 256l100.070-100.070c12.280-12.280 12.280-32.190 0-44.480l-22.240-22.240c-12.280-12.280-32.190-12.280-44.480 0L176 189.280 75.930 89.210c-12.280-12.280-32.190-12.280-44.480 0L9.210 111.450c-12.280 12.280-12.280 32.190 0 44.480L109.280 256 9.210 356.070c-12.280 12.280-12.280 32.190 0 44.480l22.240 22.240c12.280 12.280 32.200 12.280 44.480 0L176 322.720l100.070 100.070c12.280 12.280 32.200 12.280 44.480 0l22.240-22.240c12.280-12.280 12.280-32.190 0-44.480L242.720 256z"/></svg>
<div id="cancel" class="t b">Cancel</div>
<div class="abs" style="left:2866px;top:1514px;width:146px;height:62px;background:#2e4d6b;border-radius:8px"></div>
<svg style="left:2891.00px;top:1528.60px;width:25.99px;height:29.70px" viewBox="0 0 448 512" fill="#fff"><path d="M433.941 129.941l-83.882-83.882A48 48 0 0 0 316.118 32H48C21.490 32 0 53.490 0 80v352c0 26.510 21.490 48 48 48h352c26.510 0 48-21.490 48-48V163.882a48 48 0 0 0-14.059-33.941zM224 416c-35.346 0-64-28.654-64-64 0-35.346 28.654-64 64-64s64 28.654 64 64c0 35.346-28.654 64-64 64zm96-304.520V212c0 6.627-5.373 12-12 12H76c-6.627 0-12-5.373-12-12V108c0-6.627 5.373-12 12-12h228.520c3.183 0 6.235 1.264 8.485 3.515l3.480 3.480A11.996 11.996 0 0 1 320 111.480z"/></svg>
<div id="save" class="t b">Save</div>
<svg style="left:3013.6px;top:1573.6px;width:17px;height:17px" viewBox="0 0 17 17" fill="#d4d4d4"><rect x="12.8" y="0.0" width="4.2" height="4.2"/><rect x="6.4" y="6.4" width="4.2" height="4.2"/><rect x="12.8" y="6.4" width="4.2" height="4.2"/><rect x="0.0" y="12.8" width="4.2" height="4.2"/><rect x="6.4" y="12.8" width="4.2" height="4.2"/><rect x="12.8" y="12.8" width="4.2" height="4.2"/></svg>

</body>
</html>
